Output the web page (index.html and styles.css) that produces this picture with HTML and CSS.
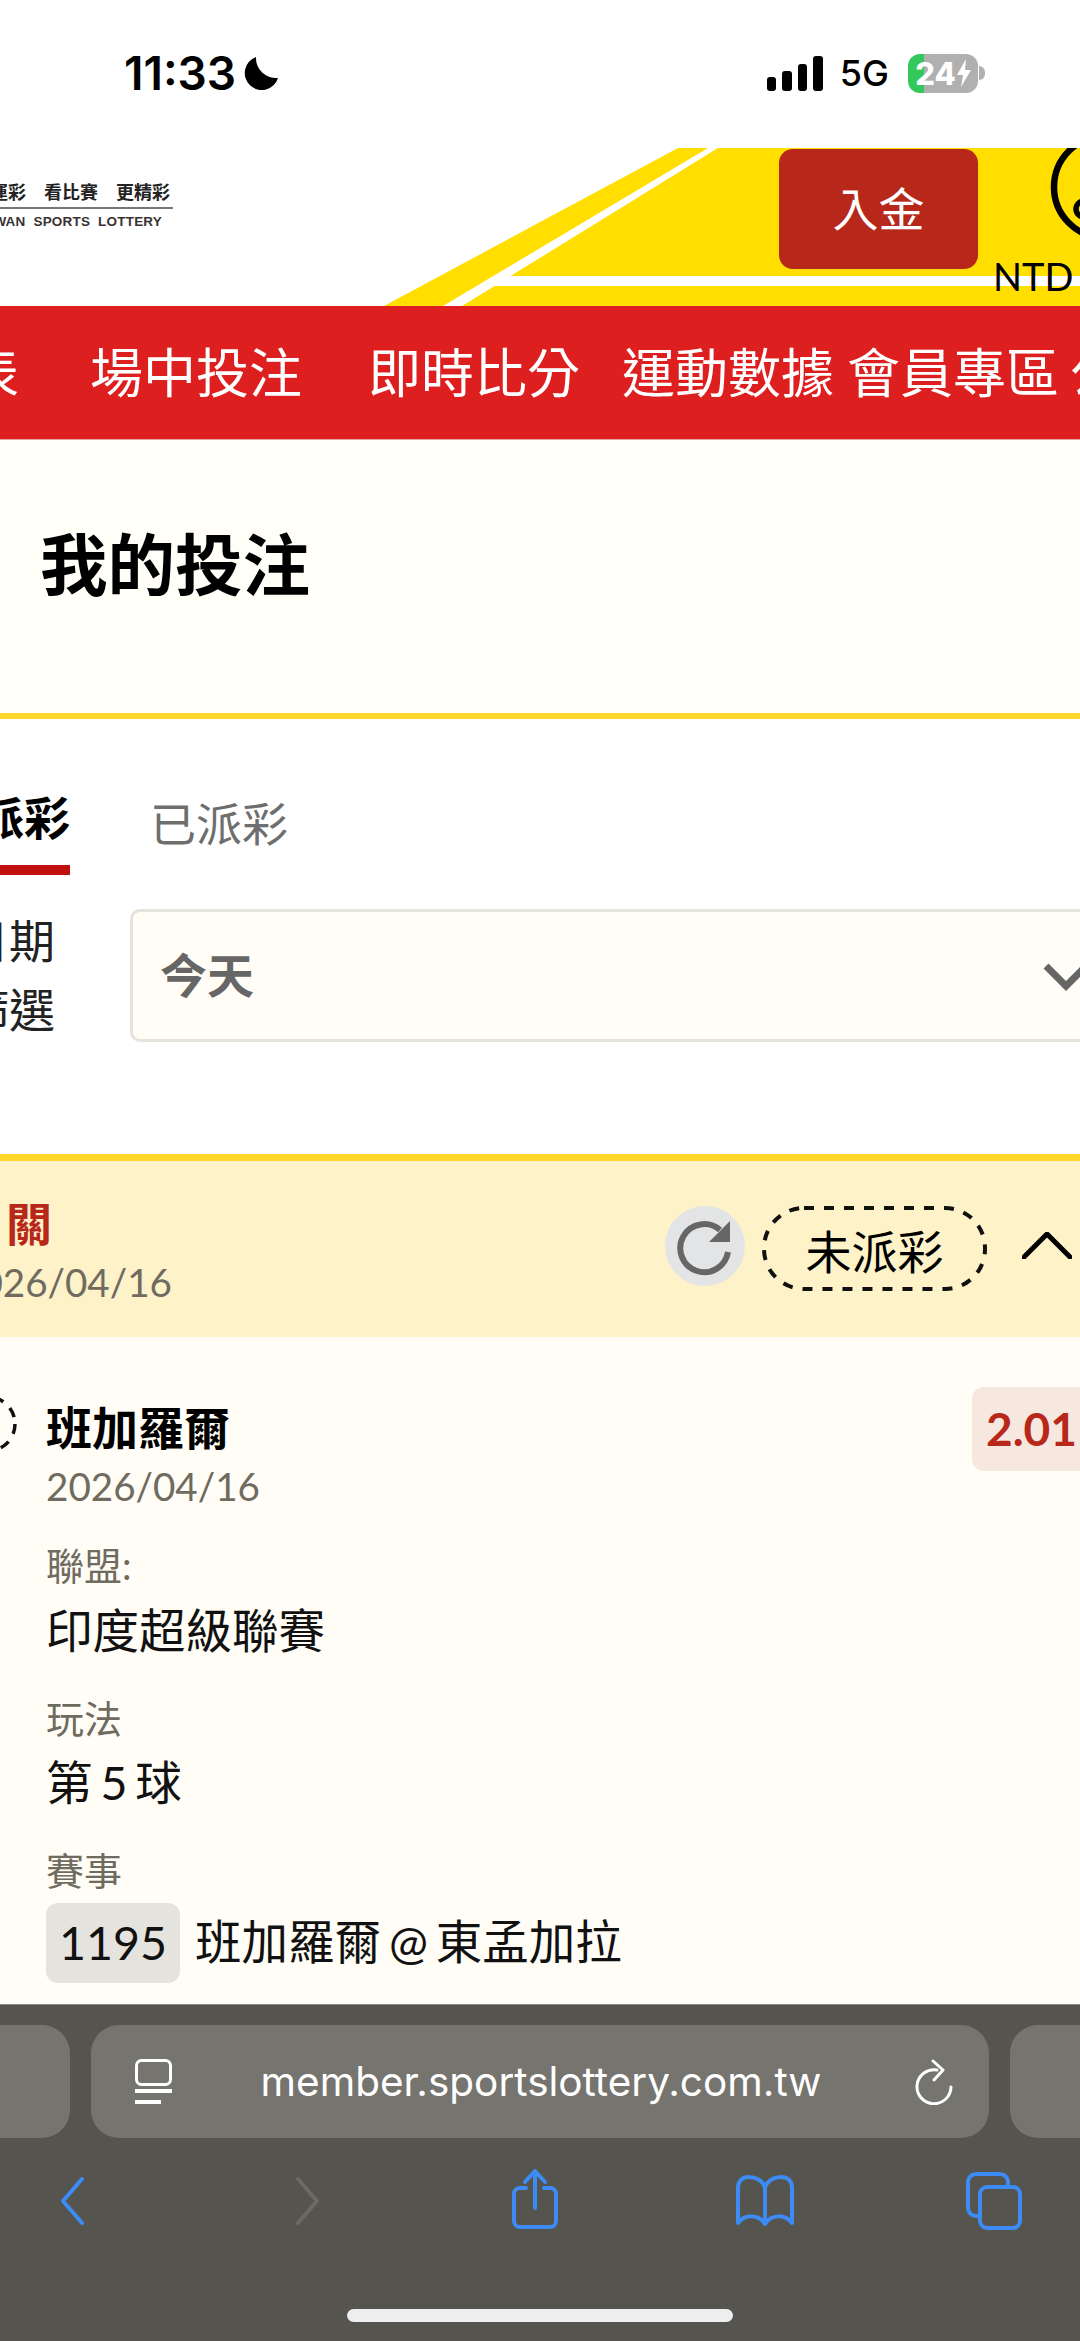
FILE: index.html
```html
<!DOCTYPE html>
<html lang="zh-Hant">
<head>
<meta charset="utf-8">
<title>我的投注</title>
<link rel="stylesheet" href="styles.css">
</head>
<body>
<div class="page">
  <div class="status">
    <span class="time">11:33</span>
    <svg class="moon" viewBox="0 0 35 34"><path d="M12 1A17 17 0 1 0 34 22A20 20 0 0 1 12 1Z"/></svg>
    <div class="status-right">
      <div class="signal"><span class="s1"></span><span class="s2"></span><span class="s3"></span><span class="s4"></span></div>
      <span class="net">5G</span>
      <div class="battery"><span>24</span><svg class="bolt" viewBox="0 0 14 28"><path d="M9 0L0 16H6L4 28L14 11H8Z"/></svg></div>
      <span class="tip"></span>
    </div>
  </div>

  <header class="header">
    <svg class="court" viewBox="0 0 1080 158">
      <polygon class="y" points="678,0 1080,0 1080,158 384,158"/>
      <polygon class="w" points="708,0 718,0 462,158 443,158"/>
      <polygon class="w" points="505,128 1080,128 1080,138 490,138"/>
      <circle class="ring" cx="1105" cy="39" r="51"/>
      <circle class="ring small" cx="1084" cy="61" r="8"/>
    </svg>
    <div class="logo">
      <div class="logo-zh">買運彩　看比賽　更精彩</div>
      <div class="logo-en">TAIWAN SPORTS LOTTERY</div>
    </div>
    <button class="deposit">入金</button>
    <div class="balance">NTD</div>
  </header>

  <nav class="nav">
    <span class="n0">賽程表</span>
    <span class="n1">場中投注</span>
    <span class="n2">即時比分</span>
    <span class="n3">運動數據</span>
    <span class="n4">會員專區</span>
    <span class="n5">公告</span>
  </nav>

  <section class="title-band"><h1>我的投注</h1></section>

  <section class="filters">
    <div class="tabs">
      <div class="tab active">未派彩</div>
      <div class="tab">已派彩</div>
    </div>
    <div class="filter-row">
      <div class="filter-label">日期<br>篩選</div>
      <div class="select">
        <span class="select-text">今天</span>
        <svg class="select-chev" viewBox="0 0 46 28"><path d="M3 3L23 23L43 3"/></svg>
      </div>
    </div>
  </section>

  <section class="group">
    <div class="group-left">
      <div class="group-name">串關</div>
      <div class="group-date">2026/04/16</div>
    </div>
    <div class="refresh">
      <svg viewBox="0 0 80 80"><path class="arc" d="M55 24A24 24 0 1 0 63 46"/><polygon class="head" points="65,15 65,36 44,36"/></svg>
    </div>
    <div class="pill">
      <svg class="pill-line" viewBox="0 0 225 85"><rect x="2" y="2" width="221" height="81" rx="40"/></svg>
      <span>未派彩</span>
    </div>
    <svg class="group-chev" viewBox="0 0 50 27"><path d="M2 25L25 2L48 25"/></svg>
  </section>

  <section class="bet">
    <div class="bet-head">
      <svg class="bet-dot" viewBox="0 0 58 58"><circle cx="29" cy="29" r="27"/></svg>
      <div class="bet-title">
        <div class="team">班加羅爾</div>
        <div class="bet-date">2026/04/16</div>
      </div>
      <div class="odds">2.01</div>
    </div>
    <div class="field first">
      <div class="f-label">聯盟:</div>
      <div class="f-value">印度超級聯賽</div>
    </div>
    <div class="field">
      <div class="f-label">玩法</div>
      <div class="f-value">第 5 球</div>
    </div>
    <div class="field">
      <div class="f-label">賽事</div>
      <div class="match"><span class="chip">1195</span><span class="match-name">班加羅爾 @ 東孟加拉</span></div>
    </div>
  </section>

  <div class="browser">
    <div class="url-row">
      <div class="side-pill"></div>
      <div class="url-pill">
        <svg class="reader" viewBox="0 0 37 45"><rect x="1.5" y="1.5" width="34" height="24" rx="5"/><path class="bars" d="M0 32H37M0 43H26"/></svg>
        <span class="url">member.sportslottery.com.tw</span>
        <svg class="reload" viewBox="0 0 38 46"><path d="M22 11A17 17 0 1 0 36 28M18 2L28 11L19 21"/></svg>
      </div>
      <div class="side-pill"></div>
    </div>
    <div class="toolbar">
      <svg class="i-back" viewBox="0 0 24 64"><path d="M22 11L3 33L22 55"/></svg>
      <svg class="i-fwd" viewBox="0 0 24 64"><path d="M2 11L21 33L2 55"/></svg>
      <svg class="i-share" viewBox="0 0 46 64"><path d="M14 20H8A6 6 0 0 0 2 26V53A6 6 0 0 0 8 59H38A6 6 0 0 0 44 53V26A6 6 0 0 0 38 20H32M23 40V3M13 14L23 3L33 14"/></svg>
      <svg class="i-book" viewBox="0 0 59 64"><path d="M30 20C28 12 20 9 14 9C7 9 3 13 3 20V55C10 46 24 46 30 56C36 46 50 46 57 55V20C57 13 53 9 46 9C40 9 32 12 30 20ZM30 20V54"/></svg>
      <svg class="i-tabs" viewBox="0 0 56 64"><path d="M12 48H10A8 8 0 0 1 2 40V14A8 8 0 0 1 10 6H34A8 8 0 0 1 42 14V18"/><rect x="14" y="19" width="40" height="41" rx="7"/></svg>
    </div>
    <div class="home-bar"></div>
  </div>
</div>
</body>
</html>
```

FILE: styles.css
```css
* { box-sizing: border-box; }
html, body { margin: 0; padding: 0; }
body {
  background: #fff;
  font-family: "Lato", "Noto Sans CJK TC", sans-serif;
  color: #000;
}
.page { width: 1080px; height: 2341px; overflow: hidden; display: flex; flex-direction: column; }

/* status bar */
.status { height: 148px; flex: none; display: flex; align-items: center; padding: 0 95px 2px 124px; background: #fff; font-family: "Inter", sans-serif; }
.time { font-size: 46px; font-weight: 600; line-height: 1; }
.moon { width: 35px; height: 34px; margin-left: 8px; fill: #000; }
.status-right { margin-left: auto; display: flex; align-items: center; }
.signal { display: flex; align-items: flex-end; gap: 6px; height: 35px; }
.signal span { width: 9.5px; background: #000; border-radius: 3px; }
.s1 { height: 14px; } .s2 { height: 20px; } .s3 { height: 27px; } .s4 { height: 35px; }
.net { font-size: 36px; font-weight: 500; margin-left: 17px; line-height: 1; }
.battery { margin-left: 19px; width: 70px; height: 39px; border-radius: 12px; background: linear-gradient(90deg, #34c759 16px, #b0b0b0 16px); color: #fff; font-size: 31px; font-weight: 800; display: flex; align-items: center; justify-content: center; gap: 1px; line-height: 1; }
.bolt { width: 14px; height: 28px; fill: #fff; }
.tip { width: 6px; height: 14px; margin-left: 1px; background: #b0b0b0; border-radius: 0 6px 6px 0; }

/* header */
.header { height: 158px; flex: none; position: relative; display: flex; align-items: flex-start; background: #fff; overflow: hidden; }
.court { position: absolute; left: 0; top: 0; width: 1080px; height: 158px; }
.court .y { fill: #ffde00; }
.court .w { fill: #fff; }
.court .ring { fill: none; stroke: #000; stroke-width: 6.5; }
.court .small { stroke-width: 5.5; }
.logo { position: relative; flex: none; width: 233px; margin-left: -60px; padding-top: 31px; text-align: right; color: #222; }
.logo-zh { font-size: 18px; font-weight: 700; line-height: 26px; padding-bottom: 2px; padding-right: 3px; border-bottom: 2px solid #777; white-space: nowrap; }
.logo-en { font-family: "Liberation Sans", sans-serif; font-size: 13.5px; font-weight: 700; line-height: 14px; margin-top: 6px; padding-right: 11px; letter-spacing: 0.2px; word-spacing: 4px; color: #3a3232; white-space: nowrap; }
.deposit { position: relative; flex: none; margin: 1px 0 0 auto; width: 199px; height: 120px; border: 0; border-radius: 14px; background: #b7281a; color: #fff; font-family: "Noto Sans CJK TC", sans-serif; font-size: 46px; padding: 0 0 6px; }
.balance { position: relative; flex: none; width: 87px; margin-left: 15px; padding-top: 109px; font-size: 38px; line-height: 38px; overflow: hidden; }

/* nav */
.nav { height: 134px; flex: none; background: #dd1f1f; color: #fff; display: flex; align-items: center; margin: 0; padding-left: 0; font-size: 53px; line-height: 60px; white-space: nowrap; overflow: hidden; border-bottom: 1px solid #e9a5a0; }
.nav span { flex: none; }
.n0 { margin-left: -140px; }
.n1 { margin-left: 71px; }
.n2 { margin-left: 66px; }
.n3 { margin-left: 42px; }
.n4 { margin-left: 13px; }
.n5 { margin-left: 11px; }

/* title */
.title-band { height: 279px; flex: none; background: #fffef7; border-bottom: 6px solid #ffd82b; padding: 88px 0 0 40px; }
.title-band h1 { margin: 0; font-size: 67.5px; font-weight: 700; line-height: 72px; }

/* tabs and filter */
.filters { height: 435px; flex: none; background: #fff; padding-top: 69px; }
.tabs { display: flex; align-items: flex-start; gap: 80px; margin-left: -68px; font-size: 46px; line-height: 60px; }
.tab { color: #6e6e6e; margin-top: 6px; }
.tab.active { color: #000; font-weight: 700; margin-top: 0; padding-bottom: 17px; border-bottom: 10px solid #c01010; }
.filter-row { display: flex; align-items: center; margin-top: 31px; margin-left: -37px; }
.filter-label { flex: none; width: 92px; font-size: 46px; line-height: 69px; color: #222; }
.select { flex: none; width: 1000px; height: 133px; margin-left: 75px; padding: 0 38px 0 27px; border: 3px solid #e5e3dc; border-radius: 10px; background: #fffdf5; display: flex; align-items: center; justify-content: space-between; font-size: 47px; font-weight: 700; color: #666; }
.select-text { padding-bottom: 6px; }
.select-chev { width: 46px; height: 28px; margin-top: 3px; fill: none; stroke: #666; stroke-width: 7; stroke-linejoin: miter; }

/* group header */
.group { height: 183px; flex: none; background: #fef2c9; border-top: 7px solid #ffd82b; display: flex; align-items: center; padding-bottom: 8px; }
.group-left { margin-left: -46px; margin-top: 16px; }
.group-name { font-size: 46px; font-weight: 700; line-height: 58px; letter-spacing: 6px; color: #b7281a; }
.group-date { font-size: 38.6px; line-height: 58px; color: #6f6b5f; margin-left: 4px; }
.refresh { flex: none; width: 80px; height: 80px; margin-left: auto; margin-top: 2px; border-radius: 50%; background: #e3e4e6; }
.refresh svg { display: block; width: 80px; height: 80px; }
.arc { fill: none; stroke: #666; stroke-width: 6; }
.head { fill: #666; }
.pill { flex: none; position: relative; width: 225px; height: 85px; margin-left: 17px; margin-top: 7px; display: flex; align-items: center; justify-content: center; font-size: 46px; }
.pill-line { position: absolute; left: 0; top: 0; width: 225px; height: 85px; }
.pill-line rect { fill: none; stroke: #111; stroke-width: 4; stroke-dasharray: 10 10; }
.group-chev { flex: none; width: 50px; height: 27px; margin: 0 8px 0 35px; fill: none; stroke: #000; stroke-width: 5; stroke-linecap: round; stroke-linejoin: round; }

/* bet */
.bet { height: 667px; flex: none; background: #fffdf5; padding: 50px 0 0 46px; overflow: hidden; }
.bet-head { display: flex; align-items: flex-start; }
.bet-dot { flex: none; width: 58px; height: 58px; margin: 8px 29px 0 -87px; fill: none; stroke: #111; stroke-width: 3.5; stroke-dasharray: 10 9; }
.bet-title { padding-top: 11px; }
.team { font-size: 46px; font-weight: 700; line-height: 60px; }
.bet-date { font-size: 38.6px; line-height: 50px; color: #6f6b5f; margin-top: 3px; }
.odds { flex: none; width: 140px; height: 84px; margin-left: auto; margin-right: -32px; padding-left: 14px; border-radius: 12px; background: #f6e7df; color: #b7281a; font-size: 46px; font-weight: 700; line-height: 84px; }
.field { margin-top: 42px; }
.field.first { margin-top: 31px; }
.f-label { font-size: 38px; line-height: 46px; color: #6f6b5f; }
.f-value { font-size: 46.5px; line-height: 46px; margin-top: 18.5px; color: #111; word-spacing: -4px; }
.match { display: flex; align-items: center; gap: 15px; margin-top: 10px; font-size: 46.5px; color: #111; word-spacing: -4px; }
.match-name { padding-bottom: 9px; }
.chip { flex: none; width: 134px; height: 80px; padding-bottom: 3px; border-radius: 12px; background: #e5e3dd; display: flex; align-items: center; justify-content: center; }

/* browser chrome */
.browser { flex: 1; background: #55544e; padding-top: 20px; border-top: 1px solid #8a8985; }
.url-row { display: flex; gap: 21px; height: 113px; }
.side-pill { flex: none; width: 100px; background: #75746e; border-radius: 28px; }
.side-pill:first-child { margin-left: -30px; }
.url-pill { flex: none; width: 898px; background: #75746e; border-radius: 28px; display: flex; align-items: center; justify-content: space-between; padding: 0 36px 0 44px; color: #fff; font-family: "Inter", sans-serif; font-size: 40.5px; }
.url { white-space: nowrap; margin-left: -5px; }
.reader { width: 37px; height: 45px; fill: none; stroke: #fff; stroke-width: 3; }
.reader .bars { stroke-width: 4; }
.reload { width: 38px; height: 46px; fill: none; stroke: #fff; stroke-width: 3; stroke-linecap: round; stroke-linejoin: round; }
.toolbar { display: flex; height: 64px; margin-top: 30px; padding-left: 60px; }
.toolbar svg { flex: none; height: 64px; fill: none; stroke: #3d8bf5; stroke-width: 4; stroke-linecap: round; stroke-linejoin: round; }
.i-back { width: 24px; }
.i-fwd { width: 24px; margin-left: 212px; }
.toolbar .i-fwd { stroke: #6b6a65; }
.i-share { width: 46px; margin-left: 192px; }
.i-book { width: 59px; margin-left: 177px; }
.i-tabs { width: 56px; margin-left: 172px; }
.home-bar { width: 386px; height: 13px; margin: 77px auto 0; border-radius: 7px; background: #eee; }
```
